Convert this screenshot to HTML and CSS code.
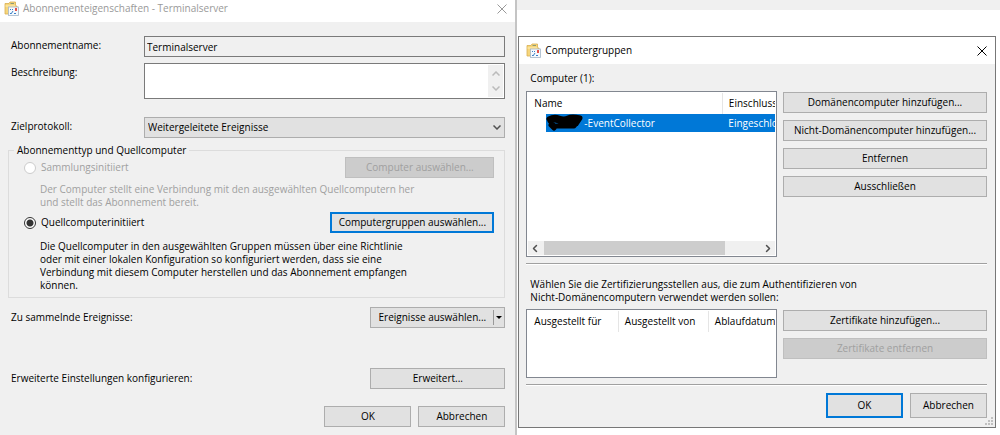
FILE: index.html
```html
<!DOCTYPE html>
<html lang="de">
  <head>
    <meta charset="UTF-8" />
    <meta name="viewport" content="width=device-width, initial-scale=1" />
    <title>Abonnementeigenschaften - Terminalserver</title>
    <link rel="stylesheet" href="styles.css">
  </head>
  <body>
    <svg width="0" height="0" class="defs" aria-hidden="true">
      <symbol id="icon-app" viewBox="0 0 15 15">
        <path d="M1 2.500h4l1-1.500h5.500v4H13v8H1z" fill="#f6d67c" stroke="#d9ae50" stroke-width="0.800" />
        <path d="M1.500 5h10" stroke="#fff0b8" />
        <path d="M6.500 2.500h3.500" stroke="#8d9a77" />
        <rect x="4.500" y="6" width="10" height="8.500" fill="#f5f9fd" stroke="#a5b6c9" stroke-width="0.800" />
        <path d="M6 8.500h1M8 8.500h1M6 12l1 1 2-3M10 12.500h2" stroke="#3c7fc6" fill="none" />
        <rect x="11" y="7" width="2" height="3" fill="#e2524d" />
      </symbol>
      <symbol id="icon-close" viewBox="0 0 10 10">
        <path d="M0.500 0.500l9 9M9.500 0.500l-9 9" fill="none" stroke="currentColor" />
      </symbol>
      <symbol id="icon-chevron" viewBox="0 0 8 5">
        <path d="M0.500 0.500L4 4l3.500-3.500" fill="none" stroke="currentColor" stroke-width="1.500" />
      </symbol>
    </svg>

    <div class="desktop">
      <section class="dialog subscription">
        <header class="title-bar inactive">
          <svg class="app-icon"><use href="#icon-app" /></svg>
          <span class="title">Abonnementeigenschaften - Terminalserver</span>
          <button class="close" aria-label="Schließen"><svg><use href="#icon-close" /></svg></button>
        </header>

        <form class="content">
          <div class="form-row">
            <label for="name">Abonnementname:</label>
            <input type="text" id="name" class="field" value="Terminalserver" readonly />
          </div>
          <div class="form-row description">
            <label for="description">Beschreibung:</label>
            <div class="text-area">
              <textarea id="description"></textarea>
              <div class="v-scroll">
                <svg class="chevron up"><use href="#icon-chevron" /></svg>
                <svg class="chevron"><use href="#icon-chevron" /></svg>
              </div>
            </div>
          </div>
          <div class="form-row protocol">
            <label for="protocol">Zielprotokoll:</label>
            <div class="select">
              <select id="protocol">
                <option>Weitergeleitete Ereignisse</option>
              </select>
              <svg class="chevron"><use href="#icon-chevron" /></svg>
            </div>
          </div>

          <fieldset>
            <legend>Abonnementtyp und Quellcomputer</legend>
            <div class="option disabled">
              <input type="radio" name="type" id="collector" disabled />
              <label for="collector">Sammlungsinitiiert</label>
              <button type="button" class="wide" disabled>Computer auswählen...</button>
            </div>
            <p class="disabled">Der Computer stellt eine Verbindung mit den ausgewählten Quellcomputern her<br />und stellt das Abonnement bereit.</p>
            <div class="option">
              <input type="radio" name="type" id="source" checked />
              <label for="source">Quellcomputerinitiiert</label>
              <button type="button" class="wider default">Computergruppen auswählen...</button>
            </div>
            <p class="source-text">Die Quellcomputer in den ausgewählten Gruppen müssen über eine Richtlinie<br />oder mit einer lokalen Konfiguration so konfiguriert werden, dass sie eine<br />Verbindung mit diesem Computer herstellen und das Abonnement empfangen<br />können.</p>
          </fieldset>

          <div class="action-row">
            <span>Zu sammelnde Ereignisse:</span>
            <div class="split">
              <button type="button" class="split-main">Ereignisse auswählen...</button>
              <button type="button" class="split-arrow" aria-label="Mehr"><span class="arrow"></span></button>
            </div>
          </div>
          <div class="action-row advanced">
            <span>Erweiterte Einstellungen konfigurieren:</span>
            <button type="button" class="medium">Erweitert...</button>
          </div>
          <footer>
            <button type="button" class="small">OK</button>
            <button type="button" class="small">Abbrechen</button>
          </footer>
        </form>
      </section>

      <div class="backdrop">
        <section class="dialog groups">
          <header class="title-bar">
            <svg class="app-icon"><use href="#icon-app" /></svg>
            <span class="title">Computergruppen</span>
            <button class="close" aria-label="Schließen"><svg><use href="#icon-close" /></svg></button>
          </header>

          <div class="content">
            <p class="list-label">Computer (1):</p>
            <div class="columns">
              <div class="list computers">
                <table>
                  <colgroup><col class="col-name" /><col class="col-status" /></colgroup>
                  <thead>
                    <tr><th>Name</th><th>Einschluss</th></tr>
                  </thead>
                  <tbody>
                    <tr>
                      <td class="computer-name">
                        <div class="selected">
                          <svg class="scribble" viewBox="0 0 38 18">
                            <path d="M3 5Q8 2 13 4T22 4T34 4L30 10Q24 14 17 9T4 7L8 12H28L32 7M5 11L8 14M16 12L31 5" fill="none" stroke="#000" stroke-width="5" stroke-linecap="round" stroke-linejoin="round" />
                          </svg><span>-EventCollector</span>
                        </div>
                      </td>
                      <td class="selected">Eingeschlossen</td>
                    </tr>
                  </tbody>
                </table>
                <div class="h-scroll">
                  <svg class="chevron left"><use href="#icon-chevron" /></svg>
                  <div class="track"><div class="thumb"></div></div>
                  <svg class="chevron right"><use href="#icon-chevron" /></svg>
                </div>
              </div>
              <div class="buttons">
                <button>Domänencomputer hinzufügen...</button>
                <button>Nicht-Domänencomputer hinzufügen...</button>
                <button>Entfernen</button>
                <button>Ausschließen</button>
              </div>
            </div>

            <hr />
            <p class="cert-text">Wählen Sie die Zertifizierungsstellen aus, die zum Authentifizieren von<br />Nicht-Domänencomputern verwendet werden sollen:</p>
            <div class="columns">
              <div class="list certificates">
                <table>
                  <colgroup><col class="col-issued" /><col class="col-issued" /><col class="col-date" /></colgroup>
                  <thead>
                    <tr><th>Ausgestellt für</th><th>Ausgestellt von</th><th>Ablaufdatum</th></tr>
                  </thead>
                </table>
              </div>
              <div class="buttons">
                <button>Zertifikate hinzufügen...</button>
                <button disabled>Zertifikate entfernen</button>
              </div>
            </div>
            <hr />
            <footer>
              <button class="default">OK</button>
              <button>Abbrechen</button>
            </footer>
          </div>
          <svg class="grip" viewBox="0 0 8 8">
            <path d="M6 0h2v2H6zM3 3h2v2H3zM6 3h2v2H6zM0 6h2v2H0zM3 6h2v2H3zM6 6h2v2H6z" fill="#c0c0c0" />
          </svg>
        </section>
      </div>
    </div>
  </body>
</html>
```
FILE: styles.css
```css
* {
  box-sizing: border-box;
}
body {
  margin: 0;
  background: #fff;
  color: #000;
  font-family: "Open Sans", "Noto Sans", sans-serif;
  font-size: 10px;
  line-height: 13px;
}
p {
  margin: 0;
  white-space: nowrap;
}
button,
input,
select,
textarea {
  font: inherit;
  color: inherit;
  margin: 0;
}
button {
  height: 21px;
  padding: 0;
  border: 1px solid #adadad;
  background: #e1e1e1;
  white-space: nowrap;
}
button:disabled {
  border-color: #bfbfbf;
  background: #ccc;
  color: #a0a0a0;
}
button.default {
  border: 2px solid #0078d7;
}
.defs {
  position: absolute;
}
.desktop {
  display: flex;
  align-items: flex-start;
}
.dialog {
  background: #f0f0f0;
}
.title-bar {
  display: flex;
  align-items: center;
  background: #fff;
}
.inactive {
  color: #999;
}
.app-icon {
  width: 15px;
  height: 15px;
  margin-right: 4px;
}
.title {
  flex: 1;
}
.close {
  display: flex;
  align-items: center;
  border: 0;
  background: none;
}
.close svg {
  width: 10px;
  height: 10px;
}
.chevron {
  width: 8px;
  height: 5px;
  color: #505050;
}
.up {
  transform: rotate(180deg);
}
.left {
  transform: rotate(90deg);
}
.right {
  transform: rotate(-90deg);
}
footer {
  display: flex;
  justify-content: flex-end;
  gap: 7px;
}

/* subscription dialog */
.subscription {
  flex: 519;
  border-right: 2px solid #c4c4c4;
  border-bottom: 1px solid #aaa;
}
.subscription .title-bar {
  height: 22px;
  padding: 0 8px 5px 4px;
}
.subscription .content {
  padding: 14px 10px 8px 8px;
}
.form-row {
  display: flex;
  padding-left: 3px;
  margin-bottom: 6px;
}
.form-row > label {
  width: 133px;
  padding-top: 3px;
}
.field,
.text-area,
.select {
  flex: 1;
}
.field {
  height: 21px;
  padding: 0 2px;
  border: 1px solid #7a7a7a;
  background: #f0f0f0;
}
.text-area {
  display: flex;
  height: 36px;
  padding: 1px;
  border: 1px solid #7a7a7a;
  background: #fff;
}
.text-area textarea {
  flex: 1;
  border: 0;
  padding: 2px;
  resize: none;
  overflow: hidden;
}
.v-scroll {
  display: flex;
  flex-direction: column;
  align-items: center;
  justify-content: space-between;
  width: 15px;
  padding: 6px 0;
  background: #f0f0f0;
}
.v-scroll .chevron {
  color: #bbb;
}
.description {
  margin-bottom: 18px;
}
.select {
  position: relative;
}
.select select {
  appearance: none;
  width: 100%;
  height: 21px;
  padding: 0 3px;
  border: 1px solid #adadad;
  border-radius: 0;
  background: #e1e1e1;
}
.select .chevron {
  position: absolute;
  right: 4px;
  top: 8px;
}
fieldset {
  margin: 0;
  padding: 0 10px 4px 15px;
  border: 1px solid #dcdcdc;
}
legend {
  margin-left: -10px;
  padding: 0 3px;
}
.option {
  display: flex;
  align-items: center;
  gap: 5px;
}
.option input {
  appearance: none;
  width: 12px;
  height: 12px;
  border: 1px solid #333;
  border-radius: 50%;
  background: #fff;
}
.option input:checked {
  background: radial-gradient(circle, #333 3px, #fff 4px);
}
.option input:disabled {
  border-color: #ccc;
}
.option button {
  margin-left: auto;
}
.disabled {
  color: #a0a0a0;
}
fieldset p {
  padding: 5px 0 3px 16px;
}
fieldset .source-text {
  padding: 7px 0 1px 16px;
}
.wide {
  width: 149px;
}
.wider {
  width: 164px;
}
.medium,
.split {
  width: 135px;
}
.action-row {
  display: flex;
  align-items: center;
  justify-content: space-between;
  margin-top: 9px;
  padding-left: 3px;
}
.advanced {
  margin: 40px 0 17px;
}
.split {
  display: flex;
}
.split-main {
  flex: 1;
  border-right: 0;
}
.split-arrow {
  width: 12px;
  border-left: 0;
  display: flex;
  align-items: center;
}
.split-arrow::before {
  content: "";
  height: 15px;
  margin-right: 2px;
  border-left: 1px solid #999;
}
.arrow {
  border: 3px solid transparent;
  border-top-color: #000;
  border-bottom: 0;
}
.small {
  width: 87px;
}

/* computer groups dialog */
.backdrop {
  flex: 481;
  min-width: 0;
  padding: 26px 4px 0 1px;
  border-top: 10px solid #f0f0f0;
}
.groups {
  position: relative;
  border: 1px solid #777;
}
.groups .title-bar {
  height: 27px;
  padding: 0 8px 0 7px;
}
.groups .content {
  padding: 8px 8px 9px 7px;
}
.list-label {
  padding-left: 4px;
  margin-bottom: 6px;
}
.columns {
  display: flex;
  gap: 6px;
}
.list {
  flex: 1;
  min-width: 0;
  display: flex;
  flex-direction: column;
  justify-content: space-between;
  padding: 1px;
  border: 1px solid #828790;
  background: #fff;
  overflow: hidden;
}
.computers {
  height: 166px;
}
.certificates {
  height: 69px;
}
table {
  table-layout: fixed;
  width: 100%;
  border-collapse: collapse;
}
th {
  height: 21px;
  padding: 0 0 0 6px;
  border-right: 1px solid #e5e5e5;
  font-weight: normal;
  text-align: left;
}
th:last-child {
  border-right: 0;
}
th,
td {
  white-space: nowrap;
  overflow: hidden;
}
td {
  height: 18px;
  padding: 0 0 0 6px;
}
.col-name {
  width: 194px;
}
.col-issued {
  width: 90px;
}
.computer-name {
  padding-left: 18px;
}
.selected {
  background: #0078d7;
  color: #fff;
}
.computer-name .selected {
  display: flex;
  align-items: center;
  height: 18px;
}
.scribble {
  width: 38px;
  height: 18px;
}
.h-scroll {
  display: flex;
  align-items: center;
  height: 14px;
  padding: 0 3px;
  background: #f0f0f0;
}
.track {
  flex: 1;
  height: 14px;
  margin: 0 5px;
}
.thumb {
  width: 84%;
  height: 14px;
  background: #cdcdcd;
}
.buttons {
  display: flex;
  flex-direction: column;
  gap: 7px;
  width: 204px;
  padding-top: 1px;
}
hr {
  height: 2px;
  margin: 6px 0;
  border: 0;
  border-top: 1px solid #a0a0a0;
  border-bottom: 1px solid #fff;
}
.cert-text {
  padding: 7px 0 5px 4px;
}
.groups footer {
  padding-top: 1px;
}
.groups footer button {
  width: 77px;
  height: 25px;
}
.grip {
  position: absolute;
  right: 2px;
  bottom: 2px;
  width: 8px;
  height: 8px;
}
```
